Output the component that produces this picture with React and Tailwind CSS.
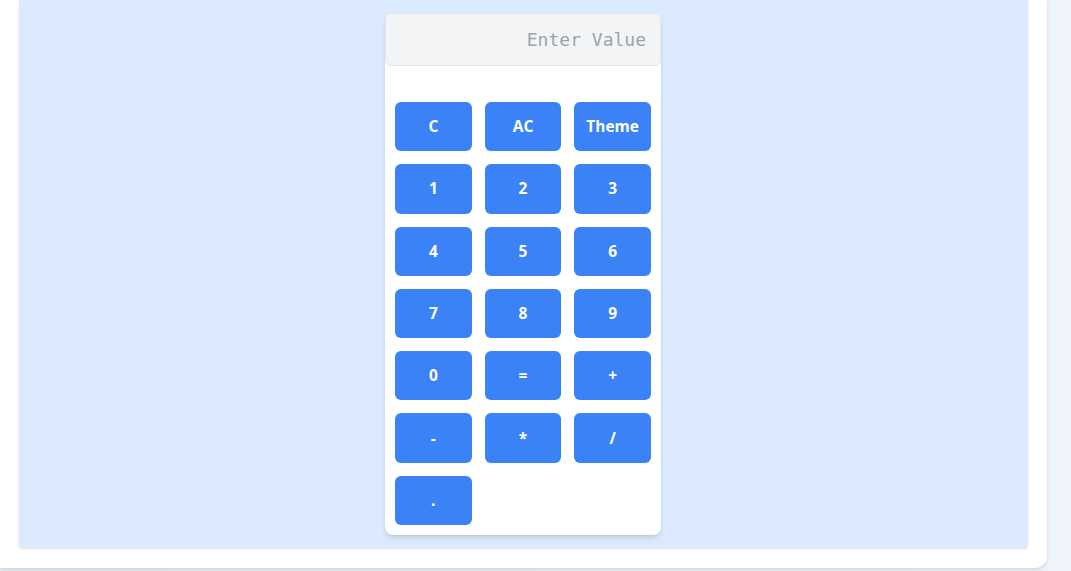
import React, { useState } from 'react';

const keys = ['C', 'AC', 'Theme', '1', '2', '3', '4', '5', '6', '7', '8', '9', '0', '=', '+', '-', '*', '/', '.'];

const Calculator = () => {
  const [value, setValue] = useState('');

  const press = (k) => {
    if (k === 'C') return setValue(value.slice(0, -1));
    if (k === 'AC') return setValue('');
    if (k === 'Theme') return;
    if (k === '=') {
      try {
        // eslint-disable-next-line no-new-func
        setValue(String(Function(`return (${value})`)()));
      } catch {
        setValue('Error');
      }
      return;
    }
    setValue(value + k);
  };

  return (
    <div className="w-[276px] bg-white rounded-lg shadow-md pb-[10px]">
      <input
        value={value}
        onChange={(e) => setValue(e.target.value)}
        placeholder="Enter Value"
        className="w-full h-[53px] bg-[#f3f4f6] border border-[#e5e7eb] rounded-md px-[14px] text-right text-[18px] text-gray-700 placeholder:text-[#9ca3af] outline-none font-['DejaVu_Sans_Mono',monospace]"
      />
      <div className="grid grid-cols-3 gap-x-[13px] gap-y-[13px] px-[10px] mt-[36px]">
        {keys.map((k) => (
          <button
            key={k}
            onClick={() => press(k)}
            className="h-[49.3px] rounded-md bg-[#3b82f6] text-white text-[15.5px] font-bold font-['Open_Sans',sans-serif]"
          >
            {k}
          </button>
        ))}
      </div>
    </div>
  );
};

export default function App() {
  return (
    <div className="h-[571px] w-[1071px] overflow-hidden bg-gradient-to-r from-[#e9eef8] to-[#eff4fd] flex">
      {/* outer white card */}
      <div className="w-[1047px] h-[568px] bg-white rounded-br-xl shadow-[0_2px_4px_rgba(0,0,0,0.12)] pl-[19px] pr-[19px] flex-shrink-0">
        {/* blue panel */}
        <div className="h-[548px] bg-[#dbeafe] rounded-b shadow-sm flex justify-center pt-[13px]">
          <div className="mr-[1px]">
            <Calculator />
          </div>
        </div>
      </div>
    </div>
  );
}
